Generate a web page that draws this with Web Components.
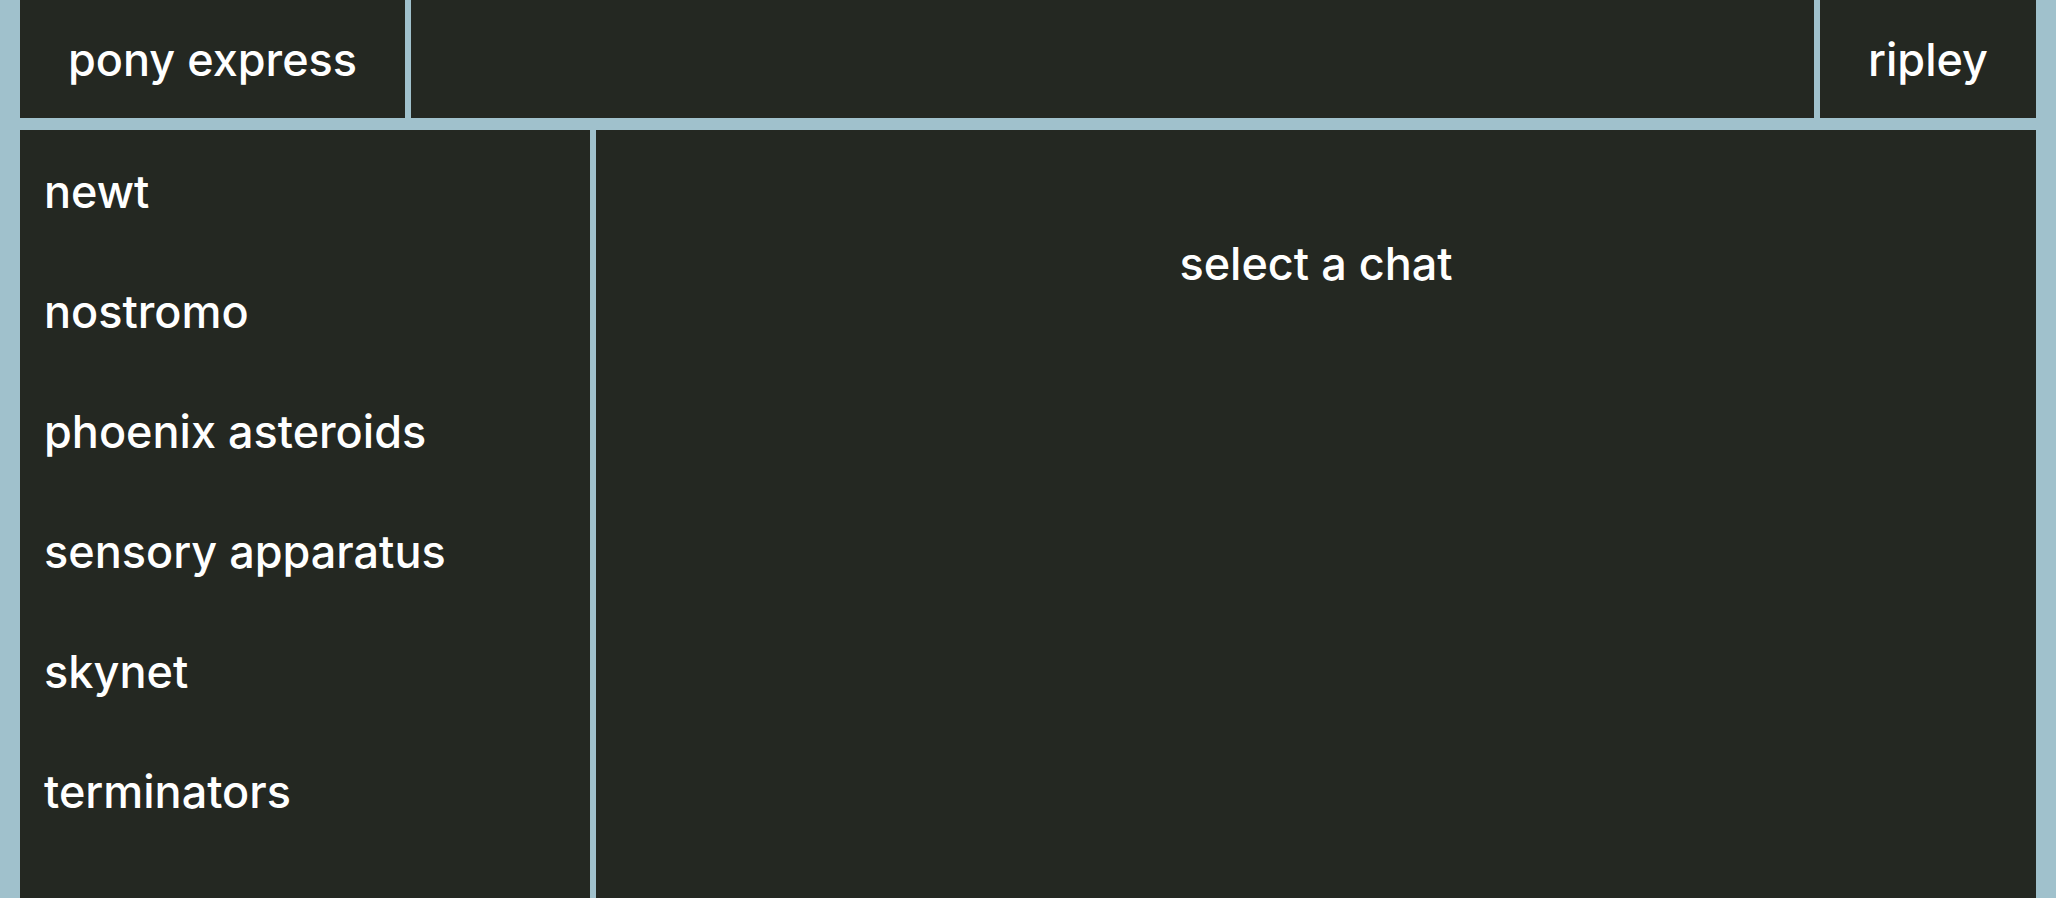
<!DOCTYPE html>
<html lang="en">
<head>
<meta charset="utf-8">
<meta name="viewport" content="width=device-width, initial-scale=1">
<title>pony express</title>
<style>
  :root {
    --panel: #242822;
    --line: #a0c1cc;
    --text: #ffffff;
  }
  body {
    margin: 0;
    background: var(--line);
    color: var(--text);
    font: 500 45px/60px Inter, "Liberation Sans", sans-serif;
  }
</style>
</head>
<body>
<pony-app>
  <pony-header slot="header">
    <nav-link href="#home">pony express</nav-link>
    <nav-link slot="account" href="#profile">ripley</nav-link>
  </pony-header>
  <chat-list slot="chats">
    <chat-item href="#newt">newt</chat-item>
    <chat-item href="#nostromo">nostromo</chat-item>
    <chat-item href="#phoenix-asteroids">phoenix asteroids</chat-item>
    <chat-item href="#sensory-apparatus">sensory apparatus</chat-item>
    <chat-item href="#skynet">skynet</chat-item>
    <chat-item href="#terminators">terminators</chat-item>
  </chat-list>
  <chat-pane>select a chat</chat-pane>
</pony-app>
<script>
  function define(name, markup, setup) {
    const template = document.createElement('template');
    template.innerHTML = markup;
    customElements.define(name, class extends HTMLElement {
      constructor() {
        super();
        this.attachShadow({ mode: 'open' }).append(template.content.cloneNode(true));
      }
      connectedCallback() {
        if (setup) setup(this);
      }
    });
  }

  const passHref = (el) => {
    el.shadowRoot.querySelector('a').href = el.getAttribute('href');
  };

  define('pony-app', `
    <style>
      :host {
        display: flex;
        flex-direction: column;
        gap: 12px;
        min-height: 100vh;
        padding: 0 20px;
        box-sizing: border-box;
      }
      main {
        flex: 1;
        display: grid;
        grid-template-columns: 2fr 5fr;
      }
    </style>
    <slot name="header"></slot>
    <main>
      <slot name="chats"></slot>
      <slot></slot>
    </main>`);

  define('pony-header', `
    <style>
      :host { display: block; }
      header { display: flex; gap: 6px; }
      .fill { flex: 1; background: var(--panel); }
    </style>
    <header>
      <slot></slot>
      <div class="fill"></div>
      <slot name="account"></slot>
    </header>`);

  define('nav-link', `
    <style>
      :host { display: block; background: var(--panel); }
      a {
        display: block;
        padding: 30px 48px 28px;
        color: inherit;
        text-decoration: none;
        white-space: nowrap;
      }
    </style>
    <a><slot></slot></a>`, passHref);

  define('chat-list', `
    <style>
      :host {
        display: block;
        background: var(--panel);
        border-right: 6px solid var(--line);
      }
    </style>
    <nav aria-label="chats"><slot></slot></nav>`);

  define('chat-item', `
    <style>
      :host { display: block; }
      a {
        display: block;
        padding: 32px 24px 28px;
        color: inherit;
        text-decoration: none;
      }
    </style>
    <a><slot></slot></a>`, passHref);

  define('chat-pane', `
    <style>
      :host {
        display: block;
        padding: 104px 24px;
        background: var(--panel);
        text-align: center;
      }
    </style>
    <slot></slot>`);
</script>
</body>
</html>
